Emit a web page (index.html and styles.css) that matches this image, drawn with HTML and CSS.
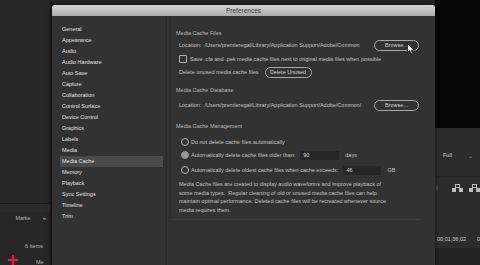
FILE: index.html
```html
<!DOCTYPE html>
<html lang="en">
<head>
    <meta charset="UTF-8">
    <meta name="viewport" content="width=device-width, initial-scale=1.0">
    <title>Preferences - Media Cache</title>
    <link rel="stylesheet" href="styles.css">
</head>
<body>

    <div class="screen">

        <!-- Project panel behind the dialog -->
        <aside class="app-left">
            <div class="panel-tabs">
                <span class="tab-name">Marke</span>
                <span class="tab-more">&raquo;</span>
            </div>
            <div class="item-count">6 Items</div>
            <div class="panel-foot">
                <span class="red-plus"></span>
                <span class="foot-label">Me</span>
            </div>
        </aside>

        <!-- Preferences dialog -->
        <div class="dialog">
            <div class="titlebar">Preferences</div>
            <div class="dialog-body">
                <ul class="nav">
                    <li>General</li>
                    <li>Appearance</li>
                    <li>Audio</li>
                    <li>Audio Hardware</li>
                    <li>Auto Save</li>
                    <li>Capture</li>
                    <li>Collaboration</li>
                    <li>Control Surface</li>
                    <li>Device Control</li>
                    <li>Graphics</li>
                    <li>Labels</li>
                    <li>Media</li>
                    <li class="active">Media Cache</li>
                    <li>Memory</li>
                    <li>Playback</li>
                    <li>Sync Settings</li>
                    <li>Timeline</li>
                    <li>Trim</li>
                </ul>

                <div class="pane">
                    <div class="pane-box">
                        <h3 class="group-title">Media Cache Files</h3>
                        <div class="row row-loc">
                            <span class="loc">Location:&nbsp; /Users/premieregal/Library/Application Support/Adobe/Common</span>
                            <button class="btn btn-browse">Browse...</button>
                        </div>
                        <div class="row row-check">
                            <span class="checkbox"></span>
                            <span>Save .cfa and .pek media cache files next to original media files when possible</span>
                        </div>
                        <div class="row row-delete">
                            <span>Delete unused media cache files</span>
                            <button class="btn btn-delete">Delete Unused</button>
                        </div>

                        <h3 class="group-title group-db">Media Cache Database</h3>
                        <div class="row row-loc second">
                            <span class="loc">Location:&nbsp; /Users/premieregal/Library/Application Support/Adobe/Common/</span>
                            <button class="btn btn-browse">Browse...</button>
                        </div>

                        <h3 class="group-title group-mgmt">Media Cache Management</h3>
                        <div class="row row-radio first">
                            <span class="radio"></span>
                            <span>Do not delete cache files automatically</span>
                        </div>
                        <div class="row row-radio">
                            <span class="radio checked"></span>
                            <span>Automatically delete cache files older than:</span>
                            <span class="field field-days">90</span>
                            <span class="unit">days</span>
                        </div>
                        <div class="row row-radio last">
                            <span class="radio"></span>
                            <span>Automatically delete oldest cache files when cache exceeds:</span>
                            <span class="field field-gb">46</span>
                            <span class="unit">GB</span>
                        </div>

                        <p class="note">Media Cache files are created to display audio waveforms and improve playback of<br>
                            some media types.&nbsp; Regular cleaning of old or unused media cache files can help<br>
                            maintain optimal performance. Deleted cache files will be recreated whenever source<br>
                            media requires them.</p>
                    </div>
                </div>
            </div>

            <!-- mouse pointer over the first Browse button -->
            <svg class="cursor" width="8" height="12" viewBox="0 0 8 12">
                <path d="M0.5 0.5 L0.5 9.5 L2.7 7.6 L4.2 11 L5.6 10.4 L4.1 7.1 L7 7.1 Z" fill="#fff" stroke="#111" stroke-width="0.8"/>
            </svg>
        </div>

        <!-- Program monitor behind the dialog -->
        <aside class="app-right">
            <div class="monitor"></div>
            <div class="zoom-select">
                <span>Full</span>
                <span class="chev">&#8964;</span>
            </div>
            <div class="edit-icons">
                <span class="marker"></span>
                <svg width="11" height="8" viewBox="0 0 11 8">
                    <rect x="3.5" y="0.5" width="4" height="3" fill="none" stroke="#bdbdbd" stroke-width="1"/>
                    <rect x="0" y="4" width="4" height="4" fill="#bdbdbd"/>
                    <rect x="7" y="4" width="4" height="4" fill="#bdbdbd"/>
                </svg>
                <svg width="11" height="8" viewBox="0 0 11 8">
                    <rect x="3.5" y="0.5" width="4" height="3" fill="none" stroke="#bdbdbd" stroke-width="1"/>
                    <rect x="0" y="4" width="4" height="4" fill="#bdbdbd"/>
                    <rect x="7" y="4" width="4" height="4" fill="#bdbdbd"/>
                </svg>
            </div>
            <div class="timecode"><span>00;01;36;02</span><span>0</span></div>
            <div class="timeline-strip"></div>
        </aside>

    </div>

</body>
</html>
```

FILE: styles.css
```css
/* General Styling */
body {
    margin: 0;
    padding: 0;
    background-color: #1f1f1f;
    font-family: 'Liberation Sans', Arial, sans-serif;
    overflow: hidden;
}

.screen {
    display: flex;
    width: 480px;
    height: 265px;
    background-color: #232323;
}

/* Project panel (left, behind dialog) */
.app-left {
    width: 50px;
    border-right: 2px solid #1a1a1a;
    display: flex;
    flex-direction: column;
    background-color: #262626;
    color: #b8b8b8;
    font-size: 5.5px;
}

.panel-tabs {
    margin-top: 203px;
    height: 11px;
    border-top: 1px solid #1c1c1c;
    background-color: #2b2b2b;
    display: flex;
    align-items: flex-end;
    justify-content: flex-end;
    padding: 0 4px 0 0;
    gap: 12px;
}

.tab-name {
    position: relative;
    top: 9px;
}

.tab-more {
    position: relative;
    top: 9px;
    font-size: 6px;
}

.item-count {
    margin-top: 31px;
    text-align: right;
    padding-right: 7px;
}

.panel-foot {
    display: flex;
    align-items: center;
    margin-top: 6px;
    padding-left: 8px;
}

.red-plus {
    position: relative;
    width: 10px;
    height: 10px;
}

.red-plus::before,
.red-plus::after {
    content: "";
    position: absolute;
    background-color: #d3283e;
    box-shadow: 0 0 2px #a01828;
}

.red-plus::before {
    left: 4px;
    top: 0;
    width: 2px;
    height: 10px;
}

.red-plus::after {
    left: 0;
    top: 4px;
    width: 10px;
    height: 2px;
}

.foot-label {
    margin-left: 18px;
    margin-top: 4px;
}

/* Preferences dialog */
.dialog {
    position: relative;
    width: 383px;
    margin-top: 5px;
    display: flex;
    flex-direction: column;
    background-color: #323232;
    box-shadow: 0 0 4px rgba(0, 0, 0, 0.6);
}

.titlebar {
    height: 11px;
    line-height: 11px;
    text-align: center;
    font-size: 6.5px;
    color: #3a3a3a;
    background: linear-gradient(#d4d4d4, #ababab);
    border-radius: 3px 3px 0 0;
}

.dialog-body {
    flex: 1;
    display: flex;
}

.nav {
    list-style: none;
    width: 103px;
    margin: 0;
    padding: 8px 2px 0 8px;
    border-right: 2px solid #2a2a2a;
}

.nav li {
    height: 11px;
    line-height: 11px;
    padding-left: 2px;
    font-size: 5.5px;
    color: #e2e2e2;
}

.nav li.active {
    background-color: #4a4a4a;
}

/* Right pane */
.pane {
    flex: 1;
    padding: 0 0 0 3px;
}

.pane-box {
    width: 244px;
    padding: 12px 0 5px 5px;
    border-left: 1px solid #2c2c2c;
    border-bottom: 1px solid #3c3c3c;
    color: #c4c4c4;
    font-size: 5.5px;
}

.group-title {
    margin: 0;
    height: 10px;
    line-height: 10px;
    font-size: 5.5px;
    font-weight: normal;
    color: #bdbdbd;
}

.group-db {
    margin-top: 7px;
}

.group-mgmt {
    margin-top: 10px;
}

.row {
    display: flex;
    align-items: center;
    height: 12px;
    padding-left: 3px;
}

.row-loc {
    margin-top: 1px;
}

.row-loc.second {
    margin-top: 4px;
}

.loc {
    flex: 1;
}

.row-check {
    height: 10px;
    margin-top: 3px;
}

.row-delete {
    margin-top: 2px;
}

.checkbox {
    width: 6px;
    height: 6px;
    margin-right: 3px;
    border: 1px solid #b0b0b0;
    border-radius: 1px;
}

.btn {
    height: 11px;
    padding: 0;
    border: 1px solid #a8a8a8;
    border-radius: 6px;
    background: transparent;
    color: #d0d0d0;
    font-family: inherit;
    font-size: 5.5px;
    line-height: 9px;
}

.btn-browse {
    width: 45px;
    margin-right: 1px;
}

.btn-delete {
    width: 47px;
    margin-left: 6px;
}

.row-radio {
    margin-top: 2px;
    padding-left: 5px;
}

.row-radio.first {
    height: 10px;
    margin-top: 6px;
}

.row-radio.last {
    margin-top: 3px;
}

.radio {
    width: 6px;
    height: 6px;
    margin-right: 2px;
    border: 1px solid #b4b4b4;
    border-radius: 50%;
}

.radio.checked {
    border-color: #8f8f8f;
    background-color: #9a9a9a;
}

.field {
    height: 9px;
    line-height: 9px;
    margin-left: 5px;
    padding-left: 3px;
    background-color: #262626;
    color: #d8d8d8;
}

.field-days {
    width: 36px;
}

.field-gb {
    width: 35px;
}

.unit {
    margin-left: 6px;
}

.note {
    margin: 4px 0 0 3px;
    line-height: 8.5px;
    color: #c4c4c4;
}

.cursor {
    position: absolute;
    left: 355px;
    top: 38px;
}

/* Program monitor (right, behind dialog) */
.app-right {
    flex: 1;
    display: grid;
    grid-template-rows: 128px 22px 10px 16px 18px 1fr 10px 21px;
    grid-template-areas:
        "monitor"
        "."
        "zoom"
        "."
        "icons"
        "."
        "tc"
        "strip";
    background-color: #2c2c2c;
    color: #d4d4d4;
    font-size: 5.5px;
    overflow: hidden;
}

.monitor {
    grid-area: monitor;
    background-color: #060606;
}

.zoom-select {
    grid-area: zoom;
    display: flex;
    align-items: center;
    padding-left: 8px;
    gap: 16px;
}

.chev {
    color: #9c9c9c;
    font-size: 6px;
}

.edit-icons {
    grid-area: icons;
    display: flex;
    align-items: center;
    border-top: 1px solid #262626;
    gap: 6px;
    padding-top: 5px;
}

.marker {
    width: 0;
    height: 0;
    margin-right: 8px;
    border-top: 3px solid transparent;
    border-bottom: 3px solid transparent;
    border-right: 3px solid #505050;
}

.timecode {
    grid-area: tc;
    display: flex;
    align-items: center;
    gap: 11px;
    padding-left: 2px;
    white-space: nowrap;
    color: #cfcfcf;
}

.timeline-strip {
    grid-area: strip;
    margin-top: 4px;
    background-color: #222;
}
```
